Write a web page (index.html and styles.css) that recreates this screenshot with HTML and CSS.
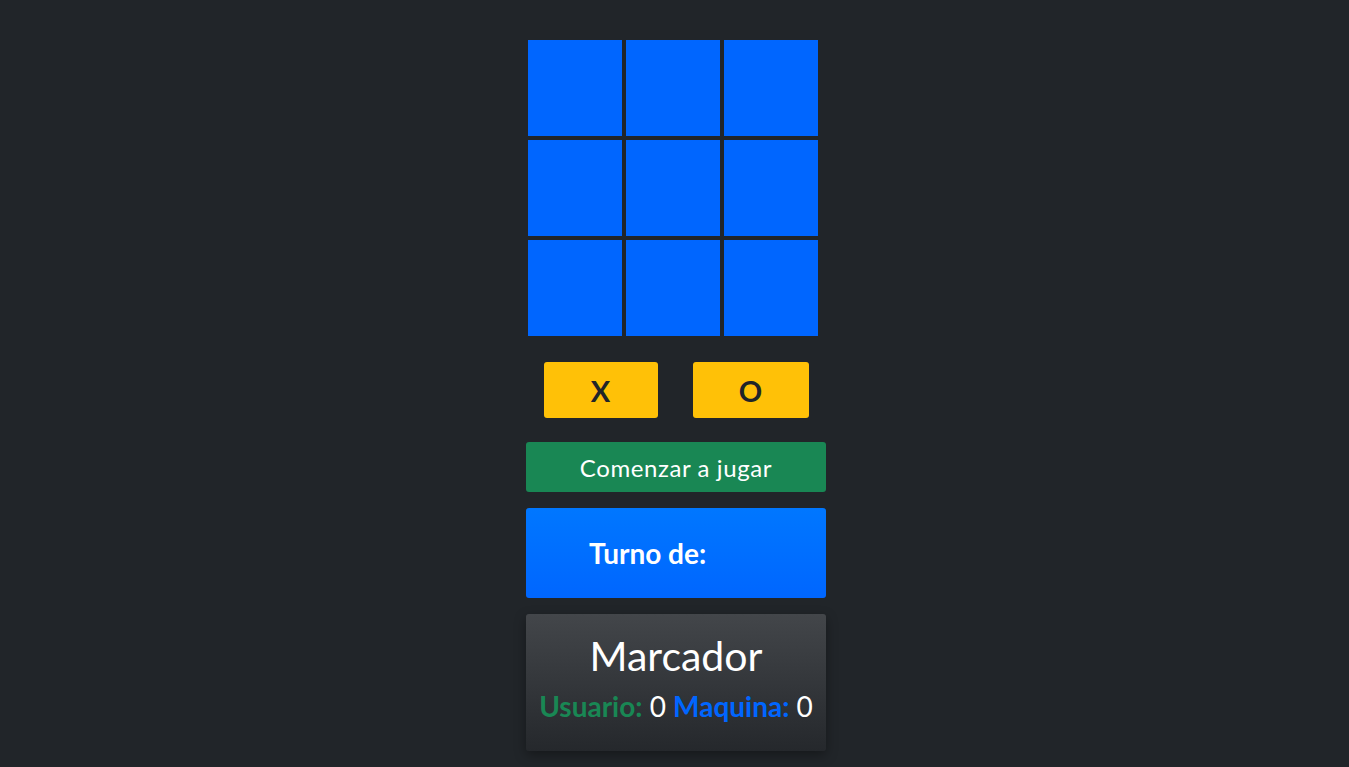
FILE: index.html
```html
<!DOCTYPE html>
<html lang="es">
<head>
<meta charset="utf-8">
<title>Tres en raya</title>
<link rel="stylesheet" href="styles.css">
</head>
<body>
<main class="game">
  <div class="board">
    <div class="cell"></div><div class="cell"></div><div class="cell"></div>
    <div class="cell"></div><div class="cell"></div><div class="cell"></div>
    <div class="cell"></div><div class="cell"></div><div class="cell"></div>
  </div>
  <div class="choices">
    <button class="choice choice-x">X</button>
    <button class="choice choice-o">O</button>
  </div>
  <button class="start">Comenzar a jugar</button>
  <div class="turn"><span class="turn-label">Turno de:</span><span class="turn-value"></span></div>
  <section class="score">
    <h2 class="score-title">Marcador</h2>
    <p class="score-line"><span class="lbl-user">Usuario:</span> <span class="num">0</span> <span class="lbl-cpu">Maquina:</span> <span class="num">0</span></p>
  </section>
</main>
</body>
</html>
```
FILE: styles.css
```css
* { box-sizing: border-box; }
html, body { height: 100%; }
body {
  margin: 0;
  background: #212529;
  font-family: Lato, "Noto Sans", sans-serif;
  color: #fff;
}
.game {
  width: 300px;
  margin-left: calc(50% - 148.5px);
  padding-top: 40px;
  display: flex;
  flex-direction: column;
}
.board {
  width: 290px;
  margin-left: 2px;
  display: grid;
  grid-template-columns: repeat(3, 94px);
  grid-template-rows: repeat(3, 96px);
  gap: 4px;
}
.cell { background: #0066ff; }
.choices {
  margin-top: 26px;
  display: flex;
  justify-content: space-around;
}
.choice {
  height: 56px;
  border: 0;
  border-radius: 3px;
  background: #ffc107;
  color: #212529;
  font-family: inherit;
  font-weight: 700;
  font-size: 29px;
  padding: 0;
}
.choice-x { width: 114px; }
.choice-o { width: 116px; }
.start {
  margin-top: 24px;
  height: 50px;
  border: 0;
  border-radius: 3px;
  background: #198754;
  color: #fff;
  font-family: inherit;
  font-size: 24px;
  padding: 0;
  letter-spacing: 0.6px;
}
.turn {
  margin-top: 16px;
  height: 90px;
  border-radius: 3px;
  background: linear-gradient(#0077ff, #0066ff);
  display: flex;
  align-items: center;
  padding-left: 63px;
  font-size: 28px;
  font-weight: 700;
}
.score {
  margin-top: 16px;
  height: 137px;
  border-radius: 3px;
  background: linear-gradient(#43464a, #25282c);
  box-shadow: 0 4px 12px rgba(0,0,0,0.35);
  text-align: center;
  padding-top: 19px;
}
.score-title {
  margin: 0;
  font-size: 41px;
  font-weight: 400;
  line-height: 46px;
}
.score-line {
  margin: 10px 0 0;
  font-size: 28px;
  line-height: 34px;
}
.lbl-user { color: #198754; font-weight: 700; }
.lbl-cpu { color: #0066ff; font-weight: 700; }
```
